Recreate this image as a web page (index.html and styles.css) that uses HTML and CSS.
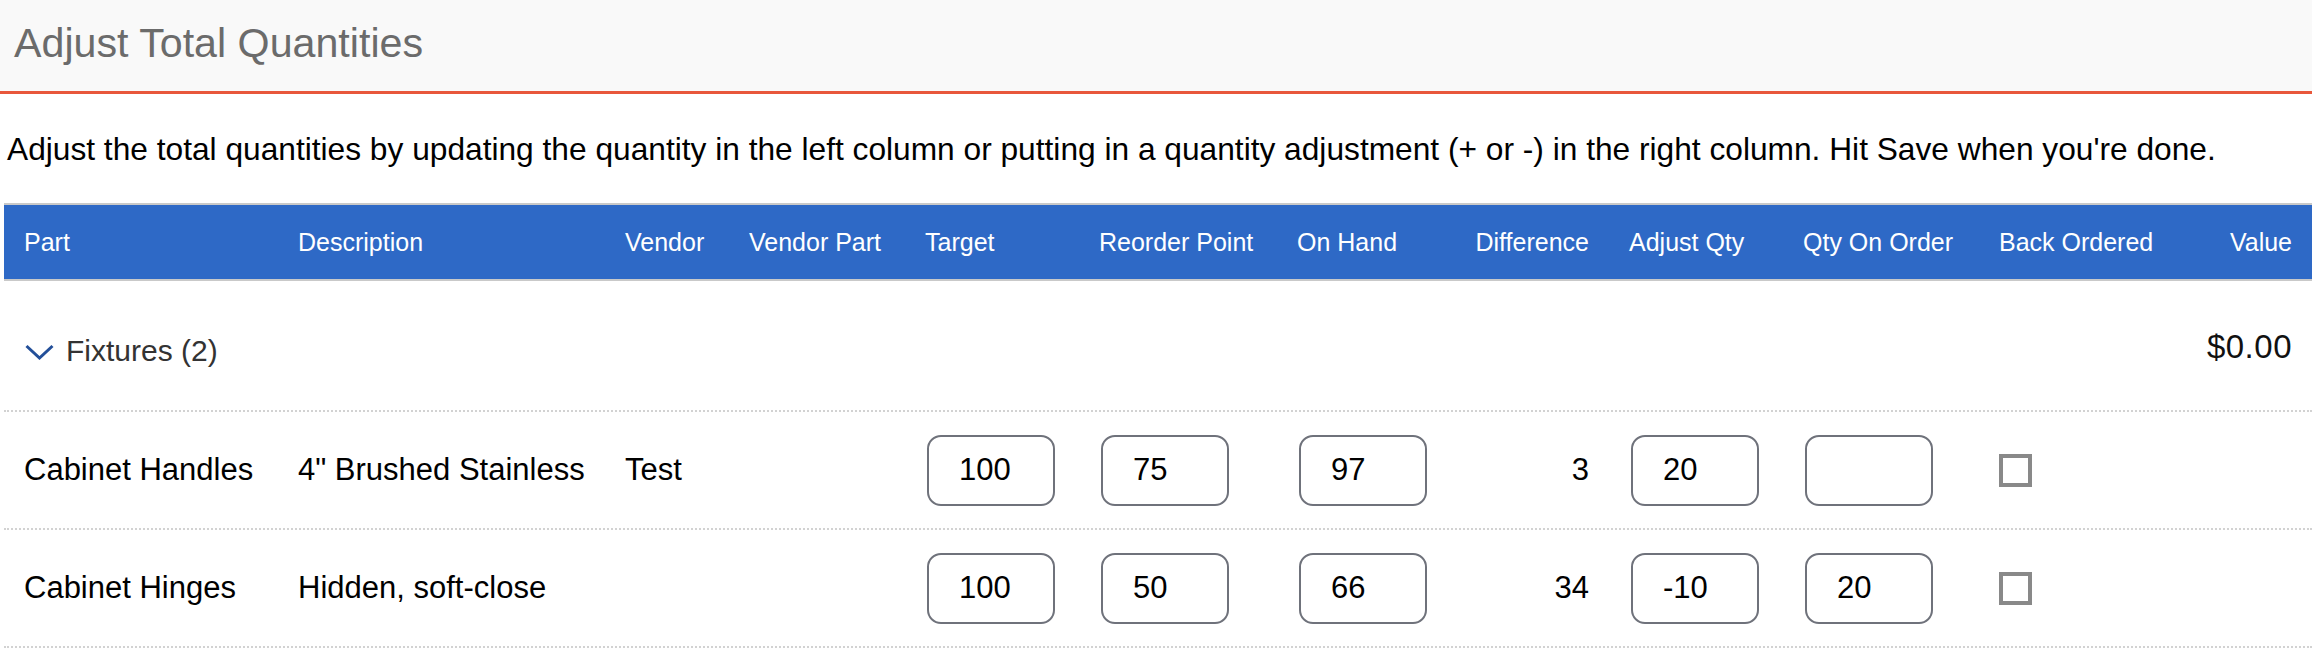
FILE: index.html
```html
<!DOCTYPE html>
<html lang="en">
<head>
<meta charset="utf-8">
<title>Adjust Total Quantities</title>
<link rel="stylesheet" href="styles.css">
</head>
<body>
<header class="titlebar">
  <h1 class="title">Adjust Total Quantities</h1>
</header>
<main class="content">
  <p class="intro">Adjust the total quantities by updating the quantity in the left column or putting in a quantity adjustment (+ or -) in the right column. Hit Save when you're done.</p>
  <div class="sheet">
    <div class="row head">
      <div class="cell">Part</div>
      <div class="cell">Description</div>
      <div class="cell">Vendor</div>
      <div class="cell">Vendor Part</div>
      <div class="cell">Target</div>
      <div class="cell">Reorder Point</div>
      <div class="cell">On Hand</div>
      <div class="cell num">Difference</div>
      <div class="cell">Adjust Qty</div>
      <div class="cell">Qty On Order</div>
      <div class="cell">Back Ordered</div>
      <div class="cell num">Value</div>
    </div>
    <div class="row group">
      <div class="group-label">
        <svg class="chev" width="30" height="16" viewBox="0 0 30 16"><polyline points="1.5,2 14.5,14 27.5,2" fill="none" stroke="#234f99" stroke-width="3"/></svg>
        <span>Fixtures (2)</span>
      </div>
      <div class="cell num value">$0.00</div>
    </div>
    <div class="row item">
      <div class="cell">Cabinet Handles</div>
      <div class="cell">4" Brushed Stainless</div>
      <div class="cell">Test</div>
      <div class="cell"></div>
      <div class="cell"><input class="qty" type="text" value="100"></div>
      <div class="cell"><input class="qty" type="text" value="75"></div>
      <div class="cell"><input class="qty" type="text" value="97"></div>
      <div class="cell num">3</div>
      <div class="cell"><input class="qty" type="text" value="20"></div>
      <div class="cell"><input class="qty" type="text" value=""></div>
      <div class="cell"><input class="chk" type="checkbox"></div>
      <div class="cell num"></div>
    </div>
    <div class="row item">
      <div class="cell">Cabinet Hinges</div>
      <div class="cell">Hidden, soft-close</div>
      <div class="cell"></div>
      <div class="cell"></div>
      <div class="cell"><input class="qty" type="text" value="100"></div>
      <div class="cell"><input class="qty" type="text" value="50"></div>
      <div class="cell"><input class="qty" type="text" value="66"></div>
      <div class="cell num">34</div>
      <div class="cell"><input class="qty" type="text" value="-10"></div>
      <div class="cell"><input class="qty" type="text" value="20"></div>
      <div class="cell"><input class="chk" type="checkbox"></div>
      <div class="cell num"></div>
    </div>
  </div>
</main>
</body>
</html>
```
FILE: styles.css
```css
html, body {
  margin: 0;
  padding: 0;
  background: #ffffff;
  font-family: "Liberation Sans", Arial, sans-serif;
  color: #000;
}

.titlebar {
  height: 91px;
  background: #f9f9f9;
  border-bottom: 3px solid #e8573b;
  box-sizing: content-box;
}

.title {
  margin: 0;
  padding: 20px 0 0 14px;
  font-size: 41.2px;
  font-weight: normal;
  color: #6b6b6b;
  line-height: normal;
}

.content {
  padding-left: 4px;
}

.intro {
  margin: 38px 0 36px 3px;
  font-size: 31.7px;
  line-height: 35px;
  color: #000;
  white-space: nowrap;
}

.sheet {
  width: 2308px;
}

.row {
  display: grid;
  grid-template-columns: 274px 327px 124px 176px 174px 198px 175px 157px 174px 196px 200px 133px;
  align-items: center;
}

.cell {
  padding: 0 20px;
  white-space: nowrap;
}

.num {
  text-align: right;
}

.head {
  height: 74px;
  background: #2e69c6;
  border-top: 2px solid #c9c9c9;
  border-bottom: 2px solid #c9c9c9;
  color: #ffffff;
  font-size: 25px;
  box-sizing: content-box;
}

.group {
  height: 119px;
  padding-top: 10px;
  border-bottom: 2px dotted #d2d2d2;
  font-size: 30px;
  color: #333333;
  box-sizing: content-box;
}

.group-label {
  grid-column: 1 / 12;
  display: flex;
  align-items: center;
  gap: 11px;
  padding-left: 21px;
}

.chev {
  display: block;
  margin-top: 2px;
}

.value {
  font-size: 33px;
  letter-spacing: 0.5px;
  color: #111;
  margin-top: -8px;
}

.item {
  height: 116px;
  border-bottom: 2px dotted #d2d2d2;
  font-size: 31px;
  color: #000;
  box-sizing: content-box;
}

.qty {
  display: block;
  width: 128px;
  height: 71px;
  box-sizing: border-box;
  margin: 0 0 0 2px;
  padding: 0 0 0 30px;
  border: 2px solid #6f727b;
  border-radius: 14px;
  background: #fff;
  font-family: "Liberation Sans", Arial, sans-serif;
  font-size: 31px;
  color: #000;
  outline: none;
}

.chk {
  display: block;
  -webkit-appearance: none;
  appearance: none;
  width: 33px;
  height: 33px;
  margin: 0;
  box-sizing: border-box;
  border: 4px solid #898989;
  border-radius: 0;
  background: #fff;
}
```
